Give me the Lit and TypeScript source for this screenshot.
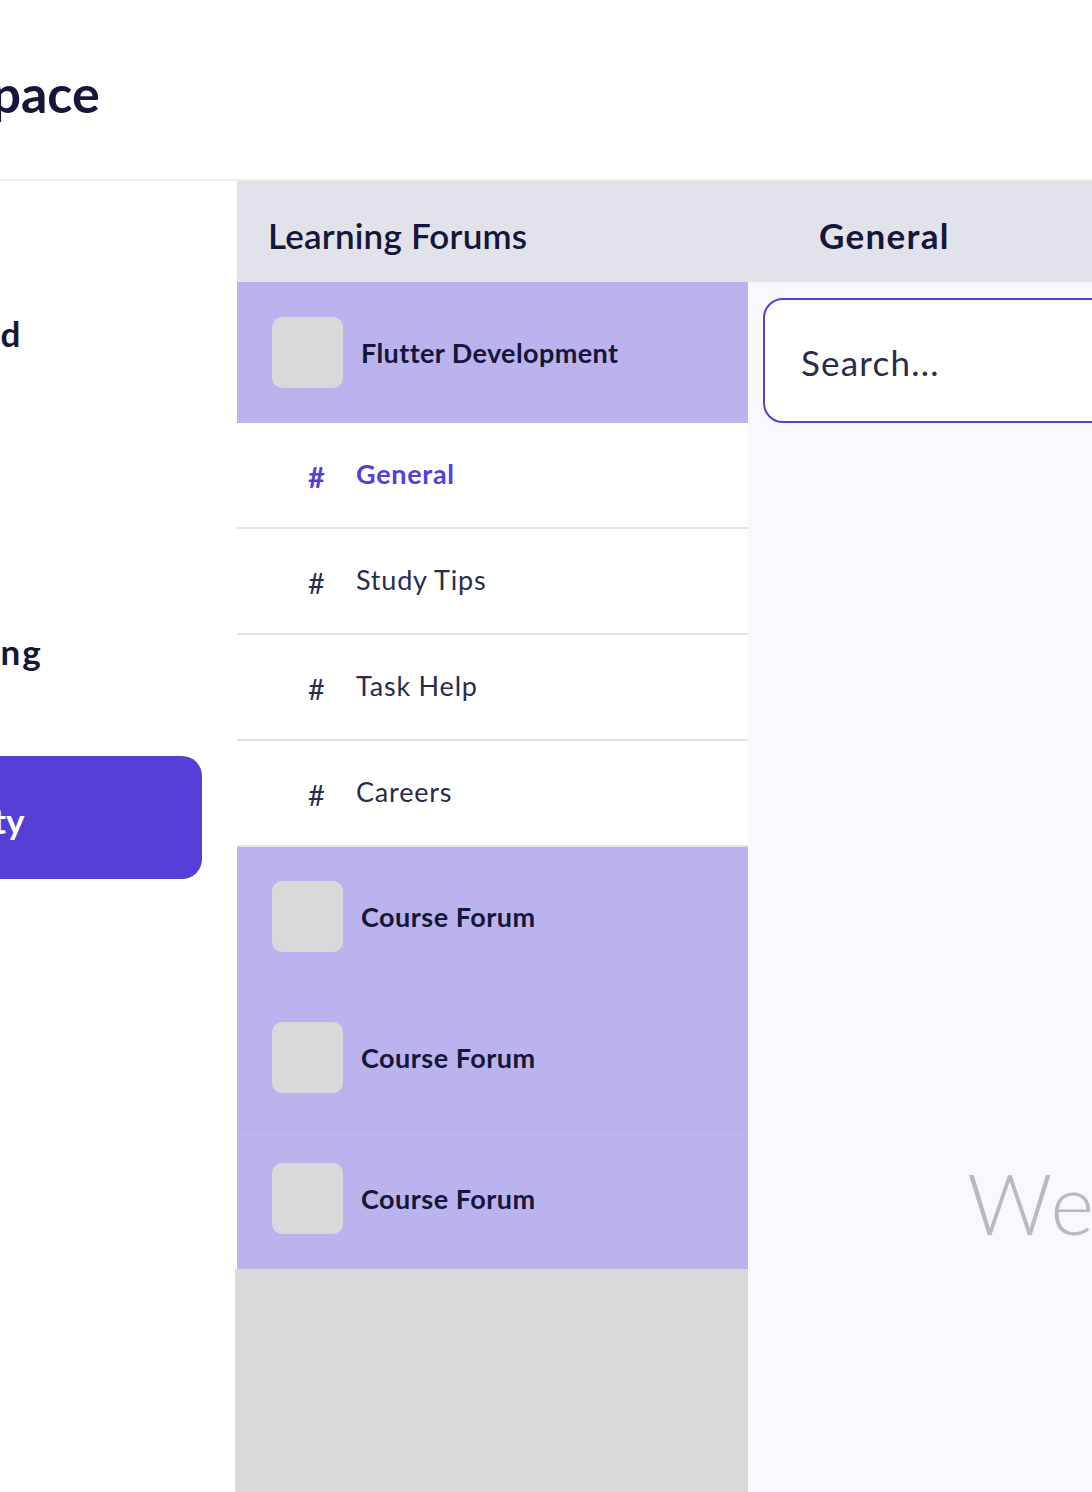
import { LitElement, html, css } from 'lit';
import { customElement } from 'lit/decorators.js';

const NAV = [
  { label: 'Dashboard', cls: 'dashboard' },
  { label: 'Courses', cls: '' },
  { label: 'Networking', cls: 'networking' },
  { label: 'Community', cls: 'active' },
];

const CHANNELS = ['General', 'Study Tips', 'Task Help', 'Careers'];

@customElement('app-root')
export class AppRoot extends LitElement {
  static override styles = css`
    :host {
      display: block;
      width: 1092px;
      height: 1492px;
      overflow: hidden;
      background: #fff;
      color: #14163a;
      font-family: 'Lato', 'Noto Sans', sans-serif;
    }

    .topbar {
      height: 181px;
      box-sizing: border-box;
      border-bottom: 2px solid #eeeef4;
      display: flex;
      align-items: center;
      padding-top: 6px;
    }

    .brand {
      margin-left: -160px;
      font-size: 52px;
      font-weight: 700;
      white-space: nowrap;
    }

    .body {
      display: flex;
      height: 1311px;
    }

    .sidebar {
      width: 237px;
      flex: none;
      box-sizing: border-box;
      padding: 92px 35px 0 0;
      display: flex;
      flex-direction: column;
      gap: 38px;
    }

    .nav-item {
      height: 123px;
      box-sizing: border-box;
      margin-left: -150px;
      display: flex;
      align-items: center;
      font-size: 35px;
      font-weight: 700;
      white-space: nowrap;
      border-radius: 20px;
    }

    .nav-item.dashboard {
      padding-bottom: 4px;
      letter-spacing: 3px;
    }

    .nav-item.dashboard .label {
      margin-left: -23px;
    }

    .nav-item.networking {
      padding-bottom: 12px;
      letter-spacing: 2px;
    }

    .nav-item.networking .label {
      margin-left: -12px;
    }

    .nav-item.active {
      background: #5540d7;
      color: #fff;
      padding-top: 4px;
    }

    .nav-item.active .label {
      margin-left: -7px;
    }

    .content {
      flex: 1;
      min-width: 0;
      display: flex;
      flex-direction: column;
    }

    .heads {
      height: 101px;
      flex: none;
      box-sizing: border-box;
      background: #e1e2ea;
      display: flex;
      align-items: center;
      padding-top: 6px;
      font-size: 35px;
      font-weight: 700;
    }

    .heads .left {
      width: 511px;
      box-sizing: border-box;
      padding-left: 31px;
      font-weight: 600;
      letter-spacing: 0.2px;
    }

    .heads .right {
      padding-left: 71px;
      letter-spacing: 1.3px;
    }

    .panes {
      flex: 1;
      display: flex;
      min-height: 0;
    }

    .forums {
      width: 511px;
      flex: none;
      display: flex;
      flex-direction: column;
    }

    .forum {
      height: 141px;
      flex: none;
      box-sizing: border-box;
      background: #bbb3ed;
      display: flex;
      align-items: center;
      gap: 18px;
      padding-left: 35px;
      font-size: 27px;
      font-weight: 700;
      letter-spacing: 0.4px;
    }

    .forum.course {
      height: 140.67px;
      letter-spacing: 0.5px;
      padding-bottom: 1px;
    }

    .forum.course + .forum.course {
      border-top: 1px solid #b5adea;
    }

    .thumb {
      width: 71px;
      height: 71px;
      flex: none;
      background: #d9d9d9;
      border-radius: 10px;
    }

    .channel {
      height: 106px;
      flex: none;
      box-sizing: border-box;
      display: flex;
      align-items: center;
      padding-left: 71px;
      padding-bottom: 4px;
      font-size: 27px;
      letter-spacing: 0.8px;
      color: #2a2c4c;
      border-bottom: 2px solid #e1e2ea;
    }

    .channel.active {
      color: #5540d7;
      font-weight: 700;
      letter-spacing: 0.7px;
    }

    .hash {
      width: 48px;
      flex: none;
      font-size: 29px;
      letter-spacing: 0;
      position: relative;
      top: 3px;
    }

    .filler {
      flex: 1;
      margin-left: -2px;
      background: #d9d9d9;
    }

    .chat {
      flex: 1;
      min-width: 0;
      background: #f7f7fc;
      padding: 16px 0 0 15px;
    }

    .search {
      height: 125px;
      margin-right: -40px;
      box-sizing: border-box;
      background: #fff;
      border: 2px solid #5540d7;
      border-radius: 20px;
      display: flex;
      align-items: center;
      padding: 3px 0 0 36px;
      font-size: 35px;
      letter-spacing: 1.2px;
      color: #2a2c4c;
    }

    .welcome {
      margin: 730px 0 0 204px;
      font-size: 84px;
      font-weight: 300;
      line-height: 100px;
      letter-spacing: 2px;
      color: #b9b9be;
      white-space: nowrap;
    }
  `;

  private renderForum(name: string, cls: string) {
    return html`<div class="forum ${cls}">
      <div class="thumb"></div>
      <span>${name}</span>
    </div>`;
  }

  override render() {
    return html`
      <div class="topbar"><div class="brand">Workspace</div></div>
      <div class="body">
        <nav class="sidebar">
          ${NAV.map(
            (n) => html`<div class="nav-item ${n.cls}"><span class="label">${n.label}</span></div>`
          )}
        </nav>
        <div class="content">
          <div class="heads">
            <div class="left">Learning Forums</div>
            <div class="right">General</div>
          </div>
          <div class="panes">
            <div class="forums">
              ${this.renderForum('Flutter Development', '')}
              ${CHANNELS.map(
                (c, i) => html`<div class="channel ${i === 0 ? 'active' : ''}">
                  <span class="hash">#</span>${c}
                </div>`
              )}
              ${this.renderForum('Course Forum', 'course')}
              ${this.renderForum('Course Forum', 'course')}
              ${this.renderForum('Course Forum', 'course')}
              <div class="filler"></div>
            </div>
            <div class="chat">
              <div class="search">Search...</div>
              <div class="welcome">Welcome</div>
            </div>
          </div>
        </div>
      </div>
    `;
  }
}
